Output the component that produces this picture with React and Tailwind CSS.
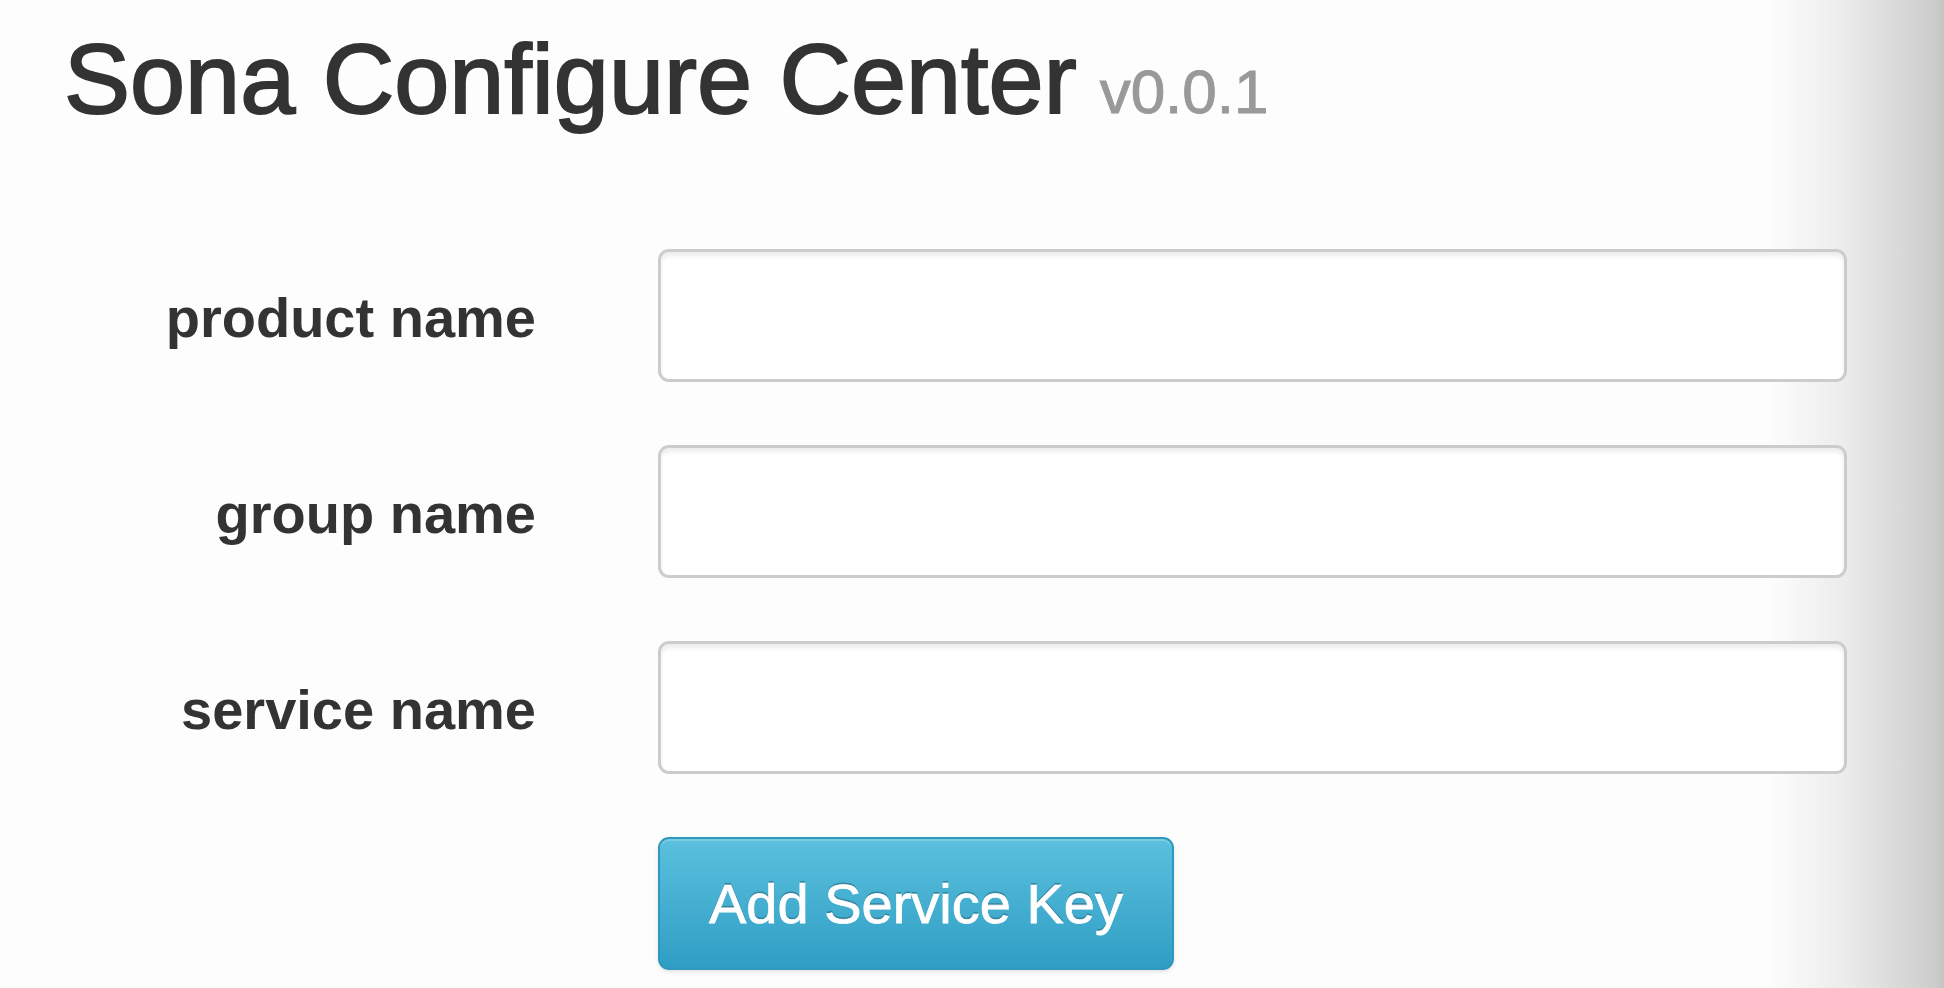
import React from 'react';

const fields = ['product name', 'group name', 'service name'];

export default function App() {
    return (
        <div className="min-h-screen w-full bg-[linear-gradient(to_right,#fdfdfd_0%,#fdfdfd_91%,#ebebeb_95%,#cdcdcd_99.5%,#c4c4c4_100%)] font-['Liberation_Sans',Arial,sans-serif] text-[#333333]">
            <div className="pl-[64px] pt-[29px]">
                <h1 className="flex items-baseline gap-[23px] leading-none">
                    <span className="text-[99px] [-webkit-text-stroke:2px_#333333]">Sona Configure Center</span>
                    <span className="text-[62px] text-[#999999] [-webkit-text-stroke:1px_#999999]">v0.0.1</span>
                </h1>

                <div className="mt-[121px] flex flex-col gap-[63px]">
                    {fields.map((f) => (
                        <div key={f} className="flex items-center">
                            <label className="w-[472px] text-right text-[56px] font-bold leading-none pt-[4px]">{f}</label>
                            <input
                                type="text"
                                className="ml-[122px] h-[133px] w-[1189px] rounded-[11px] border-[3px] border-[#cccccc] bg-white shadow-[inset_0_4px_4px_rgba(0,0,0,0.075)] outline-none"
                            />
                        </div>
                    ))}
                    <div className="flex">
                        <button className="ml-[594px] h-[133px] w-[516px] rounded-[11px] border-[2px] border-[#3198bd] bg-[linear-gradient(to_bottom,#5bc0de,#2f9ec4)] text-[56px] text-white [text-shadow:0_-2px_0_rgba(0,0,0,0.25)] [-webkit-text-stroke:0.75px_#ffffff] shadow-[inset_0_2px_0_rgba(255,255,255,0.2),0_2px_4px_rgba(0,0,0,0.1)]">
                            Add Service Key
                        </button>
                    </div>
                </div>
            </div>
        </div>
    );
}
